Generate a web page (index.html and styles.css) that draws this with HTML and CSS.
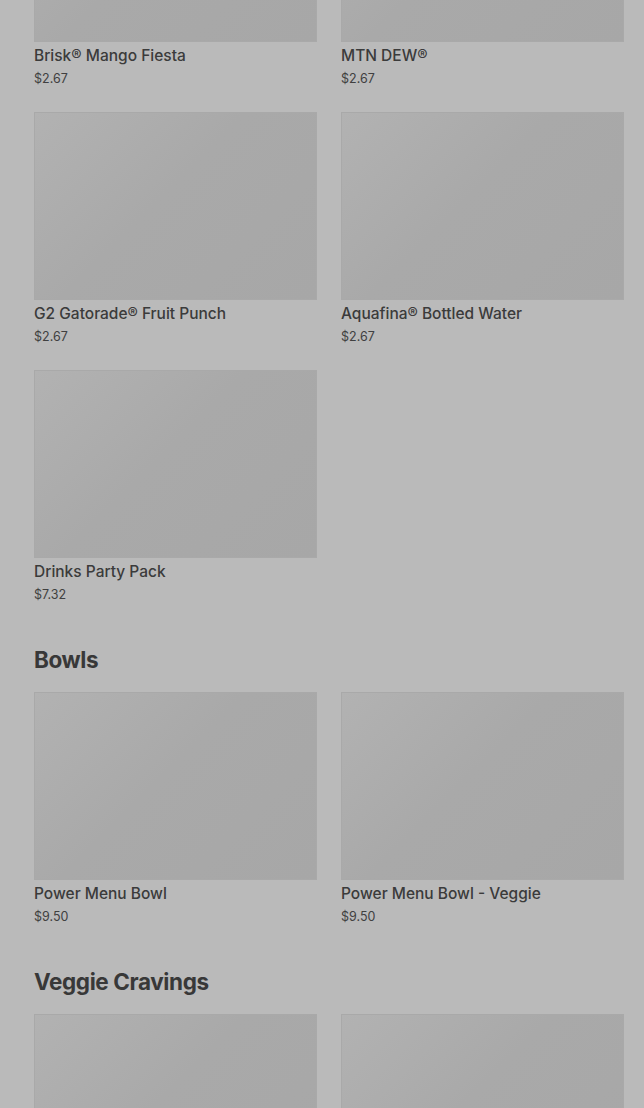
FILE: index.html
```html
<!DOCTYPE html>
<html lang="en">
<head>
    <meta charset="UTF-8">
    <title>Menu</title>
    <link rel="stylesheet" href="styles.css">
</head>
<body>
    <div class="menu">
        <div class="grid">
            <div class="item">
                <div class="photo"></div>
                <div class="name">Brisk® Mango Fiesta</div>
                <div class="price">$2.67</div>
            </div>
            <div class="item">
                <div class="photo"></div>
                <div class="name">MTN DEW®</div>
                <div class="price">$2.67</div>
            </div>
            <div class="item">
                <div class="photo"></div>
                <div class="name">G2 Gatorade® Fruit Punch</div>
                <div class="price">$2.67</div>
            </div>
            <div class="item">
                <div class="photo"></div>
                <div class="name">Aquafina® Bottled Water</div>
                <div class="price">$2.67</div>
            </div>
            <div class="item">
                <div class="photo"></div>
                <div class="name">Drinks Party Pack</div>
                <div class="price">$7.32</div>
            </div>
        </div>

        <h2 class="section-title">Bowls</h2>
        <div class="grid">
            <div class="item">
                <div class="photo"></div>
                <div class="name">Power Menu Bowl</div>
                <div class="price">$9.50</div>
            </div>
            <div class="item">
                <div class="photo"></div>
                <div class="name">Power Menu Bowl - Veggie</div>
                <div class="price">$9.50</div>
            </div>
        </div>

        <h2 class="section-title">Veggie Cravings</h2>
        <div class="grid">
            <div class="item">
                <div class="photo"></div>
            </div>
            <div class="item">
                <div class="photo"></div>
            </div>
        </div>
    </div>
</body>
</html>
```

FILE: styles.css
```css
html, body {
    background-color: #bababa;
}
body {
    margin: 0;
    font-family: Inter, "Liberation Sans", sans-serif;
    color: #3a3a3a;
    overflow: hidden;
    height: 1108px;
}
.menu {
    margin-top: -146px;
    padding: 0 20px 0 34px;
}
.grid {
    display: grid;
    grid-template-columns: 283px 283px;
    column-gap: 24px;
    row-gap: 23px;
}
.photo {
    height: 188px;
    box-sizing: border-box;
    border: 1px solid #a9a9a9;
    background: linear-gradient(135deg, #b2b2b2 0%, #a9a9a9 45%, #a7a7a7 100%);
}
.name {
    margin-top: 4px;
    font-size: 15.5px;
    font-weight: 500;
    line-height: 20px;
    color: #3b3b3b;
}
.price {
    margin-top: 3px;
    font-size: 12.5px;
    line-height: 20px;
    color: #404040;
}
.section-title {
    margin: 39px 0 16px;
    font-size: 22.5px;
    font-weight: 700;
    line-height: 32px;
    color: #383838;
    letter-spacing: -0.4px;
}
```
